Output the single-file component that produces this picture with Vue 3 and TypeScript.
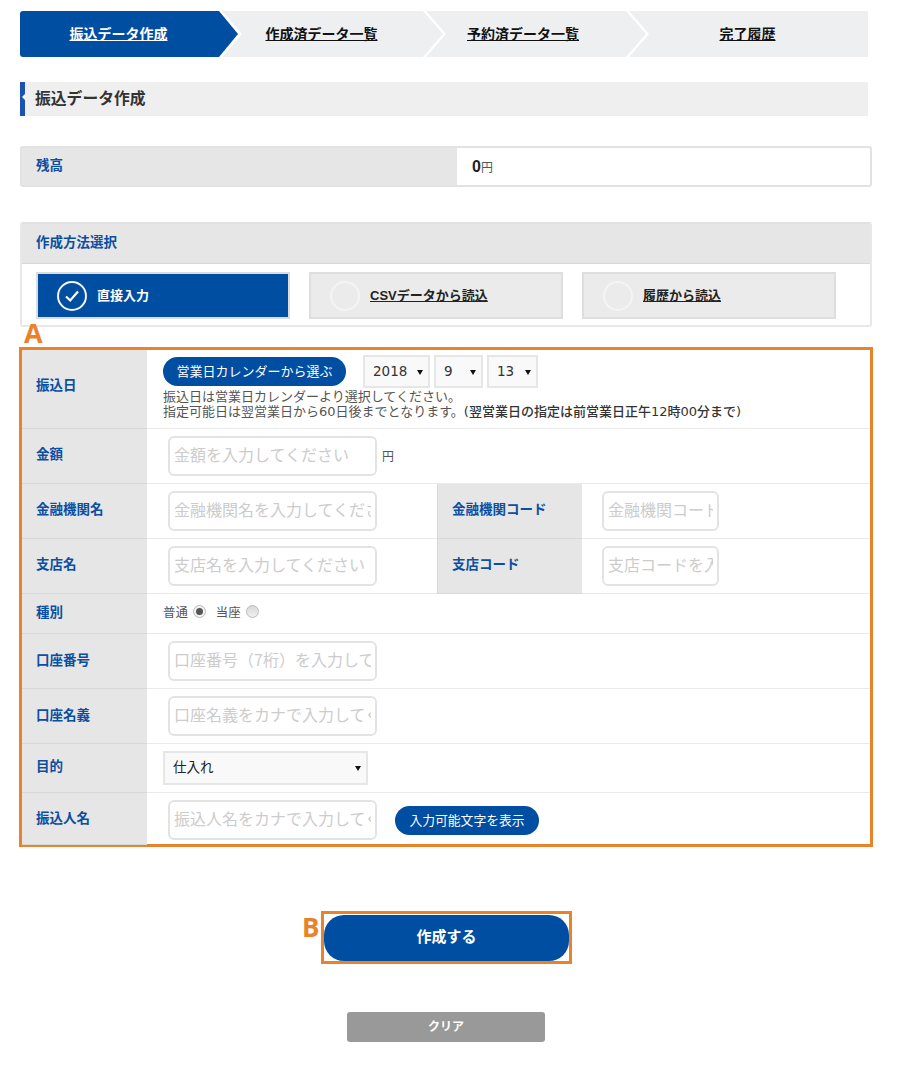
<script setup lang="ts">
const steps = ['振込データ作成', '作成済データ一覧', '予約済データ一覧', '完了履歴']
const methods = [
  { label: '直接入力', active: true },
  { label: 'CSVデータから読込', active: false },
  { label: '履歴から読込', active: false },
]
</script>

<template>
  <div class="page">
    <nav class="stepper">
      <a v-for="(s, i) in steps" :key="s" class="step" :class="`step-${i}`">
        <span>{{ s }}</span>
      </a>
    </nav>

    <h1 class="section-title">振込データ作成</h1>

    <div class="balance">
      <div class="balance-label">残高</div>
      <div class="balance-value"><b>0</b><span>円</span></div>
    </div>

    <section class="method">
      <h2 class="method-head">作成方法選択</h2>
      <div class="method-options">
        <div v-for="m in methods" :key="m.label" class="option" :class="{ active: m.active }">
          <span class="circle">
            <svg v-if="m.active" width="16" height="14" viewBox="0 0 16 14">
              <path d="M2 7.5 L6.2 11.5 L14 2.5" fill="none" stroke="#fff" stroke-width="2.2" />
            </svg>
          </span>
          <span class="option-text">{{ m.label }}</span>
        </div>
      </div>
    </section>

    <div class="form-wrap">
      <span class="mark mark-a">A</span>
      <div class="form">
        <div class="row r-date">
          <div class="label l-date">振込日</div>
          <div class="cell date-cell">
            <div class="date-top">
              <button class="pill cal">営業日カレンダーから選ぶ</button>
              <span class="sel s-year"><select><option>2018</option></select></span>
              <span class="sel s-month"><select><option>9</option></select></span>
              <span class="sel s-day"><select><option>13</option></select></span>
            </div>
            <p class="help">振込日は営業日カレンダーより選択してください。<br />指定可能日は翌営業日から60日後までとなります。<span class="help-b">(翌営業日の指定は前営業日正午12時00分まで)</span></p>
          </div>
        </div>
        <div class="row r-input">
          <div class="label l-up">金額</div>
          <div class="cell in-cell">
            <input class="field" placeholder="金額を入力してください" />
            <span class="unit">円</span>
          </div>
        </div>
        <div class="row r-input">
          <div class="label l-up">金融機関名</div>
          <div class="cell in-cell half">
            <input class="field" placeholder="金融機関名を入力してください" />
          </div>
          <div class="label label2 l-up">金融機関コード</div>
          <div class="cell in-cell code"><input class="field short" placeholder="金融機関コードを入力" /></div>
        </div>
        <div class="row r-input">
          <div class="label l-up">支店名</div>
          <div class="cell in-cell half">
            <input class="field" placeholder="支店名を入力してください" />
          </div>
          <div class="label label2 l-up">支店コード</div>
          <div class="cell in-cell code"><input class="field short" placeholder="支店コードを入力" /></div>
        </div>
        <div class="row r-kind">
          <div class="label">種別</div>
          <div class="cell kind-cell">
            <span>普通</span><span class="radio on"></span>
            <span class="kind2">当座</span><span class="radio"></span>
          </div>
        </div>
        <div class="row r-input">
          <div class="label">口座番号</div>
          <div class="cell in-cell"><input class="field" placeholder="口座番号（7桁）を入力してください" /></div>
        </div>
        <div class="row r-input">
          <div class="label">口座名義</div>
          <div class="cell in-cell"><input class="field" placeholder="口座名義をカナで入力してください" /></div>
        </div>
        <div class="row r-purpose">
          <div class="label l-up">目的</div>
          <div class="cell date-like">
            <span class="sel s-purpose"><select><option>仕入れ</option></select></span>
          </div>
        </div>
        <div class="row r-last">
          <div class="label l-last">振込人名</div>
          <div class="cell in-cell last-cell">
            <input class="field" placeholder="振込人名をカナで入力してください" />
            <button class="pill chars">入力可能文字を表示</button>
          </div>
        </div>
      </div>
    </div>

    <div class="actions">
      <div class="submit-box">
        <span class="mark mark-b">B</span>
        <button class="submit">作成する</button>
      </div>
      <button class="clear">クリア</button>
    </div>
  </div>
</template>

<style>
html, body { margin: 0; background: #fff; }
</style>

<style scoped>
.page {
  width: 910px;
  height: 1070px;
  box-sizing: border-box;
  padding: 11px 0 0 20px;
  font-family: "Noto Sans CJK JP", sans-serif;
  color: #333;
  overflow: hidden;
}

/* stepper */
.stepper { display: flex; width: 848px; height: 46px; }
.step {
  display: flex;
  align-items: center;
  justify-content: center;
  height: 46px;
  padding-bottom: 2px;
  background: #eeeff1;
  color: #111;
  font-size: 14px;
  font-weight: 700;
  text-decoration: underline;
  box-sizing: border-box;
  flex: none;
}
.step-0 {
  width: 218px;
  padding-right: 21px;
  background: #004ea2;
  color: #fff;
  border-radius: 3px 0 0 3px;
  clip-path: polygon(0 0, calc(100% - 19px) 0, 100% 50%, calc(100% - 19px) 100%, 0 100%);
}
.step-1, .step-2 {
  clip-path: polygon(0 0, calc(100% - 20px) 0, 100% 50%, calc(100% - 20px) 100%, 0 100%, 20px 50%);
}
.step-1 { width: 221px; margin-left: -16px; padding-right: 22px; }
.step-2 { width: 220px; margin-left: -17px; padding-right: 26px; }
.step-3 {
  width: 239px;
  margin-left: -17px;
  padding-right: 2px;
  clip-path: polygon(0 0, 100% 0, 100% 100%, 0 100%, 20px 50%);
}

/* section title */
.section-title {
  position: relative;
  margin: 25px 0 0;
  width: 848px;
  height: 34px;
  box-sizing: border-box;
  padding-left: 10px;
  border-left: 5px solid #1a52b0;
  background: #efeff0;
  font-size: 15.8px;
  font-weight: 700;
  line-height: 32px;
  color: #333;
}
.section-title::before {
  content: "";
  position: absolute;
  left: -3px;
  top: 12px;
  border: 3px solid transparent;
  border-right-color: #fff;
  border-left-width: 0;
}

/* balance */
.balance {
  display: flex;
  width: 852px;
  height: 41px;
  margin-top: 30px;
  box-sizing: border-box;
  border: 2px solid #e2e2e2;
  border-radius: 3px;
}
.balance-label {
  width: 435px;
  padding-left: 14px;
  box-sizing: border-box;
  background: #e6e6e6;
  color: #0b4ea2;
  font-size: 13.5px;
  font-weight: 700;
  line-height: 33px;
}
.balance-value { padding-left: 15px; line-height: 34px; }
.balance-value b { font-size: 16px; color: #222; font-family: "Liberation Sans", sans-serif; }
.balance-value span { font-size: 12px; color: #555; }

/* method */
.method {
  width: 852px;
  height: 105px;
  margin-top: 35px;
  box-sizing: border-box;
  border: 2px solid #e8e8e8;
  border-top-color: #e0e0e0;
  border-radius: 3px;
}
.method-head {
  margin: 0;
  height: 40px;
  box-sizing: border-box;
  padding-left: 14px;
  background: #e6e6e6;
  border-bottom: 1px solid #d8d8d8;
  color: #0b4ea2;
  font-size: 13.5px;
  font-weight: 700;
  line-height: 34px;
}
.method-options { display: flex; gap: 19px; padding: 8px 0 0 14px; }
.option {
  display: flex;
  align-items: center;
  gap: 10px;
  width: 254px;
  height: 47px;
  box-sizing: border-box;
  padding-left: 19px;
  background: #ebebeb;
  border: 2px solid #dedede;
  color: #222;
  font-family: "Liberation Sans", "Noto Sans CJK JP", sans-serif;
  font-size: 13px;
  font-weight: 700;
}
.option .option-text { text-decoration: underline; padding-bottom: 2px; }
.option.active { background: #004ea2; border-color: #dcdcdc; color: #fff; }
.option.active .option-text { text-decoration: none; }
.circle {
  display: flex;
  align-items: center;
  justify-content: center;
  width: 30px;
  height: 30px;
  box-sizing: border-box;
  border: 2px solid #f4f4f4;
  border-radius: 50%;
  flex: none;
}

/* form */
.form-wrap { position: relative; margin: 20px 0 0 -1px; width: 854px; }
.mark {
  position: absolute;
  color: #e8832a;
  font-family: "Open Sans", sans-serif;
  font-weight: 700;
  font-size: 27px;
  line-height: 1;
}
.mark-a { left: 5px; top: -28px; }
.form {
  height: 500px;
  box-sizing: border-box;
  border: 3px solid #e8832a;
  display: flex;
  flex-direction: column;
}
.row { display: flex; flex: none; box-sizing: border-box; border-bottom: 1px solid #eaeaea; }
.r-date { height: 79px; }
.r-input { height: 55px; }
.r-kind { height: 40px; }
.r-purpose { height: 49px; }
.r-last { height: 51px; border-bottom: 0; }
.label {
  flex: none;
  width: 125px;
  box-sizing: border-box;
  padding: 0 0 5px 14px;
  display: flex;
  align-items: center;
  background: #e6e6e6;
  box-shadow: 0 1px 0 #d8d8d8;
  color: #0b4ea2;
  font-size: 13.5px;
  font-weight: 700;
}
.l-up { padding-bottom: 7px; }
.l-date { padding-bottom: 11px; }
.l-last { padding-bottom: 3px; }
.label2 { width: 145px; padding-left: 14px; border-left: 1px solid #d8d8d8; }
.cell { display: flex; align-items: center; flex: 1; min-width: 0; }
.in-cell { padding-left: 21px; padding-bottom: 1px; }
.last-cell { padding-top: 3px; padding-bottom: 0; }
.half { flex: none; width: 290px; box-sizing: border-box; }
.code { padding-left: 20px; }
.field {
  width: 209px;
  height: 40px;
  box-sizing: border-box;
  padding: 0 4px 4px 4px;
  border: 2px solid #e3e3e3;
  border-radius: 6px;
  background: #fff;
  font-family: inherit;
  font-size: 16px;
  outline: none;
}
.field::placeholder { color: #ccc; opacity: 1; }
.field.short { width: 117px; }
.unit { margin-left: 5px; font-size: 12px; color: #555; }

.date-cell {
  display: block;
  padding: 5px 0 0 16px;
}
.date-top { display: flex; align-items: flex-start; }
.pill {
  border: 0;
  padding: 0 0 2px;
  background: #004ea2;
  color: #fff;
  font-family: inherit;
  font-size: 13px;
  border-radius: 15px;
}
.cal { width: 183px; height: 29px; margin: 2px 17px 0 0; }
.chars { width: 144px; height: 29px; margin-left: 18px; padding-bottom: 1px; font-size: 12.8px; }
.sel { position: relative; display: block; margin-right: 4px; }
.sel select {
  display: block;
  appearance: none;
  width: 100%;
  box-sizing: border-box;
  border: 2px solid #e6e6e6;
  border-radius: 0;
  background: #f9f9f9;
  color: #333;
  font-family: "DejaVu Sans", "Noto Sans CJK JP", sans-serif;
  font-size: 13.5px;
  outline: none;
}
.sel::after {
  content: "";
  position: absolute;
  right: 7px;
  top: 50%;
  margin-top: -2px;
  border-left: 3px solid transparent;
  border-right: 3px solid transparent;
  border-top: 5px solid #111;
}
.s-year { width: 67px; }
.s-month { width: 49px; }
.s-day { width: 51px; }
.s-year select, .s-month select, .s-day select { height: 33px; padding: 0 0 2px 8px; }
.s-purpose { width: 205px; margin: 0; }
.s-purpose select { height: 34px; padding: 0 0 4px 8px; color: #222; font-family: "Noto Sans CJK JP", sans-serif; }
.help {
  margin: 1px 0 0;
  font-family: "DejaVu Sans", "Noto Sans CJK JP", sans-serif;
  font-size: 13px;
  line-height: 15px;
  color: #555;
}
.help-b { font-weight: 500; color: #333; }
.date-like { padding-left: 16px; padding-bottom: 1px; }
.kind-cell { padding: 0 0 3px 16px; font-size: 12.4px; color: #555; }
.kind2 { margin-left: 10px; }
.radio {
  width: 13px;
  height: 13px;
  box-sizing: border-box;
  margin: 0 0 1px 5px;
  border: 1px solid #bbb;
  border-radius: 50%;
  background: linear-gradient(#d8d8d8, #f0f0f0);
  position: relative;
}
.radio.on { background: #f2f2f2; }
.radio.on::after {
  content: "";
  position: absolute;
  left: 2px;
  top: 2px;
  width: 7px;
  height: 7px;
  border-radius: 50%;
  background: #555;
}

/* actions */
.actions { display: flex; flex-direction: column; align-items: center; width: 853px; margin-top: 64px; }
.submit-box {
  position: relative;
  width: 251px;
  height: 53px;
  box-sizing: border-box;
  padding: 1px 0 0;
  border: 3px solid #e8832a;
}
.mark-b { left: -22px; top: 0; font-size: 26px; }
.submit {
  display: block;
  width: 245px;
  height: 46px;
  padding: 0 0 5px;
  border: 0;
  border-radius: 20px;
  background: #004ea2;
  color: #fff;
  font-family: inherit;
  font-size: 15px;
  font-weight: 700;
}
.clear {
  width: 198px;
  height: 30px;
  margin: 48px 0 0 -1px;
  padding: 0 0 3px;
  border: 0;
  border-radius: 3px;
  background: #999;
  color: #fff;
  font-family: inherit;
  font-size: 12px;
  font-weight: 700;
}
</style>
